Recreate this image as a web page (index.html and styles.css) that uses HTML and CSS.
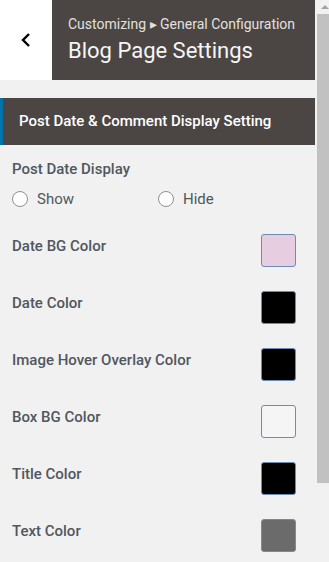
FILE: index.html
```html
<!DOCTYPE html>
<html lang="en">

<head>
    <meta charset="UTF-8">
    <meta name="viewport" content="width=device-width, initial-scale=1.0">
    <title>Blog Page Settings</title>
    <link rel="stylesheet" href="styles.css">
</head>

<body>
    <div class="panel">
        <header class="topbar">
            <button class="back" aria-label="Back">
                <svg width="12" height="16" viewBox="0 0 12 16">
                    <path d="M9 2 L3 8 L9 14" fill="none" stroke="#000" stroke-width="2.4" />
                </svg>
            </button>
            <div class="title">
                <span class="crumb">Customizing &#9656; General Configuration</span>
                <h1>Blog Page Settings</h1>
            </div>
        </header>

        <section class="settings">
            <h2 class="section-head">Post Date &amp; Comment Display Setting</h2>

            <div class="content">
                <div class="field">
                    <span class="label">Post Date Display</span>
                    <div class="radios">
                        <label class="radio"><span class="dot"></span>Show</label>
                        <label class="radio"><span class="dot"></span>Hide</label>
                    </div>
                </div>

                <ul class="colors">
                    <li><span class="label">Date BG Color</span><span class="swatch" style="background:#e6cde0"></span></li>
                    <li><span class="label">Date Color</span><span class="swatch" style="background:#000"></span></li>
                    <li><span class="label">Image Hover Overlay Color</span><span class="swatch" style="background:#000"></span></li>
                    <li><span class="label">Box BG Color</span><span class="swatch" style="background:#f5f5f5"></span></li>
                    <li><span class="label">Title Color</span><span class="swatch" style="background:#000"></span></li>
                    <li><span class="label">Text Color</span><span class="swatch" style="background:#6b6b6b"></span></li>
                </ul>
            </div>
        </section>
    </div>

    <div class="scrollbar">
        <div class="arrow"></div>
        <div class="thumb"></div>
    </div>
</body>

</html>
```

FILE: styles.css
```css
body {
    background-color: #f1f1f1;
    color: #50575e;
    font-family: Roboto, "Liberation Sans", Arial, sans-serif;
    margin: 0;
    padding: 0;
    display: flex;
    height: 562px;
    overflow: hidden;
}

.panel {
    width: 315px;
    flex: none;
}

.topbar {
    display: flex;
    height: 80px;
}

.back {
    width: 52px;
    background-color: #fff;
    border: none;
    padding: 0;
    display: flex;
    align-items: center;
    justify-content: center;
}

.title {
    flex: 1;
    background-color: #4b4644;
    padding: 14px 0 0 16px;
}

.crumb {
    display: block;
    color: #e2e0df;
    font-size: 14px;
    line-height: 20px;
}

.title h1 {
    margin: 3px 0 0;
    color: #f6f5f4;
    font-size: 22px;
    font-weight: 400;
    line-height: 28px;
}

.settings {
    margin-top: 18px;
}

.section-head {
    margin: 0;
    height: 47px;
    box-sizing: border-box;
    background-color: #4b4644;
    border-left: 3px solid #0073aa;
    padding-left: 16px;
    color: #fff;
    font-size: 15px;
    font-weight: 500;
    line-height: 46px;
}

.content {
    padding: 14px 19px 0 12px;
}

.label {
    display: block;
    font-size: 15px;
    font-weight: 500;
    line-height: 20px;
}

.radios {
    display: flex;
    margin-top: 10px;
}

.radio {
    flex: none;
    width: 146px;
    display: flex;
    align-items: center;
    font-size: 15px;
    line-height: 20px;
}

.dot {
    width: 16px;
    height: 16px;
    box-sizing: border-box;
    border: 1px solid #8c8f94;
    border-radius: 50%;
    background-color: #fff;
    margin-right: 9px;
}

.colors {
    list-style-type: none;
    margin: 25px 0 0;
    padding: 0;
}

.colors li {
    display: flex;
    justify-content: space-between;
    align-items: flex-start;
    height: 57px;
}

.colors .label {
    margin-top: 2px;
}

.swatch {
    width: 35px;
    height: 33px;
    box-sizing: border-box;
    border: 1px solid #6d8bb3;
    border-radius: 3px;
}

.scrollbar {
    flex: 1;
    padding-left: 2px;
    display: flex;
    flex-direction: column;
}

.arrow {
    height: 14px;
    position: relative;
}

.arrow::after {
    content: "";
    position: absolute;
    left: 4px;
    top: 5px;
    border-left: 4px solid transparent;
    border-right: 4px solid transparent;
    border-bottom: 4px solid #a3a3a3;
}

.thumb {
    height: 469px;
    background-color: #c1c1c1;
}
```
